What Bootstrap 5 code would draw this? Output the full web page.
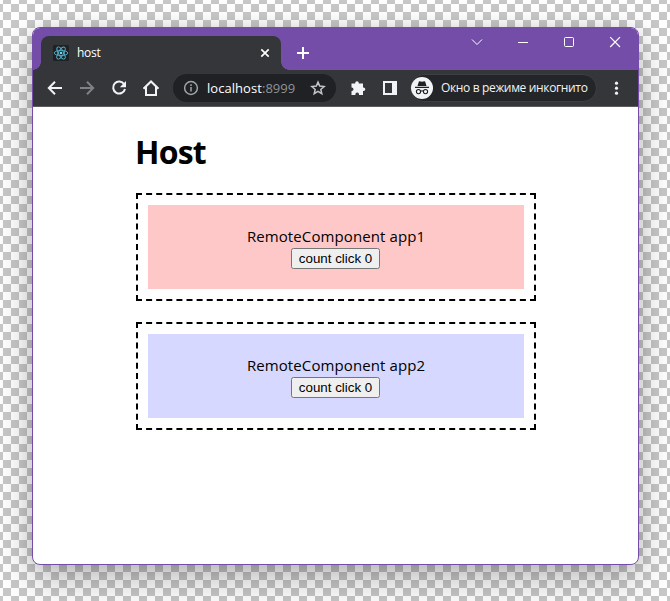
<!DOCTYPE html>
<html lang="en">
<head>
<meta charset="utf-8">
<title>host</title>
<link href="https://cdn.jsdelivr.net/npm/bootstrap@5.3.0/dist/css/bootstrap.min.css" rel="stylesheet">
<style>
body{height:601px;overflow:hidden;padding:27px 31px 0 32px;font-family:"Open Sans","Noto Sans",sans-serif;
background:repeating-conic-gradient(#c8c8c8 0 25%,#fff 0 50%) -5px -4px/16px 16px}
.window{height:538px;border:1px solid #744da9;border-radius:8px;box-shadow:0 14px 38px rgba(0,0,0,.28),0 0 14px rgba(0,0,0,.08);background:#fff}
.titlebar{height:42px;background:#744da9;color:#fff;padding-left:8px}
.tab{width:240px;height:34px;background:#35363a;border-radius:8px 8px 0 0;padding:0 11px 0 12px}
.tab::before,.tab::after{content:"";position:absolute;bottom:0;width:8px;height:8px}
.tab::before{left:-8px;background:radial-gradient(circle at 0 0,transparent 7.5px,#35363a 8px)}
.tab::after{right:-8px;background:radial-gradient(circle at 100% 0,transparent 7.5px,#35363a 8px)}
.tab-title{font-size:12px;line-height:16px;margin-left:8px;letter-spacing:-.3px}
.new-tab{margin:0 0 11px 16px}
.controls{gap:32px;padding:7px 16px 0 0}
.toolbar{height:37px;background:#35363a;border-bottom:1px solid #5b5c60;padding:0 14px}
.address{width:163px;height:28px;background:#202124;padding:0 10px;margin-left:14px}
.url{font-size:13px;color:#fff;margin-left:8px;letter-spacing:.05px;line-height:18px}
.url span{color:#8f9399}
.extensions{margin-left:14px}
.incognito{width:187px;height:28px;background:#242528;border:1px solid #3e3f43;margin-left:12px}
.incognito-label{font-size:12px;color:#f1f3f4;margin-left:8px;line-height:16px;white-space:nowrap;letter-spacing:-.35px}
.page{width:400px;margin-left:103px;color:#000}
.page h1{font-size:32px;line-height:43px;font-weight:700;margin:23px 0 20px -1px;letter-spacing:-.8px}
.remote{height:108px;border:2px dashed #000;padding:10px;margin-bottom:21px}
.remote-body{height:84px;padding-top:20px;font-size:15px;letter-spacing:.1px;line-height:23px}
.pink{background:#ffc8c8}.blue{background:#d6d8ff}
.counter{width:89px;height:21px;margin-right:1px;border:1px solid #767676;border-radius:2.5px;background:#efefef;color:#000;font:13.33px/17px "Liberation Sans",Arial,sans-serif;padding:0}
svg{display:block;flex:none}
</style>
<script src="https://cdn.jsdelivr.net/npm/bootstrap@5.3.0/dist/js/bootstrap.bundle.min.js"></script>
</head>
<body>
<div class="window overflow-hidden">
  <header class="titlebar d-flex align-items-end">
    <div class="tab position-relative d-flex align-items-center">
      <svg width="16" height="16" viewBox="0 0 16 16"><rect width="16" height="16" rx="1.5" fill="#202124"/><g fill="none" stroke="#53b3cb" stroke-width=".9"><ellipse cx="8" cy="8" rx="6.8" ry="2.6"/><ellipse cx="8" cy="8" rx="6.8" ry="2.6" transform="rotate(60 8 8)"/><ellipse cx="8" cy="8" rx="6.8" ry="2.6" transform="rotate(120 8 8)"/></g><circle cx="8" cy="8" r="1.3" fill="#61dafb"/></svg>
      <span class="tab-title">host</span>
      <svg class="ms-auto" width="10" height="10" viewBox="0 0 10 10" stroke="#fff" stroke-width="1.7"><path d="M1.3 1.3l7.4 7.4M8.7 1.3L1.3 8.7"/></svg>
    </div>
    <svg class="new-tab" width="12" height="12" viewBox="0 0 12 12" stroke="#fff" stroke-width="2"><path d="M6 0v12M0 6h12"/></svg>
    <div class="controls d-flex align-self-start ms-auto">
      <svg width="14" height="14" viewBox="0 0 14 14" fill="none" stroke="#fff"><path d="M2 4.5l5 5 5-5"/></svg>
      <svg width="14" height="14" viewBox="0 0 14 14" stroke="#fff"><path d="M2 7.5h10"/></svg>
      <svg width="14" height="14" viewBox="0 0 14 14" fill="none" stroke="#fff"><rect x="2.5" y="2.5" width="9" height="9" rx="1"/></svg>
      <svg width="14" height="14" viewBox="0 0 14 14" stroke="#fff" stroke-width="1.2"><path d="M2.2 2.2l9.8 9.8M12 2.2L2.2 12"/></svg>
    </div>
  </header>
  <nav class="toolbar d-flex align-items-center">
    <svg width="16" height="16" viewBox="0 0 16 16" fill="none" stroke="#f1f3f4" stroke-width="2"><path d="M15 8H2.5M8 1.7L1.8 8 8 14.3"/></svg>
    <svg class="ms-3" width="16" height="16" viewBox="0 0 16 16" fill="none" stroke="#808185" stroke-width="2"><path d="M1 8h12.5M8 1.7L14.2 8 8 14.3"/></svg>
    <svg class="ms-3" width="16" height="16" viewBox="0 0 16 16" fill="none" stroke="#f1f3f4" stroke-width="2"><path d="M13.2 4.2A6 6 0 1 0 14 9"/><path d="M15 1v6.2H8.8z" fill="#f1f3f4" stroke="none"/></svg>
    <svg class="ms-3" width="16" height="16" viewBox="0 0 16 16" fill="none" stroke="#f1f3f4" stroke-width="2"><path d="M.5 8.7L8 1.5l7.5 7.2M3 7v8h10V7"/></svg>
    <div class="address d-flex align-items-center rounded-pill">
      <svg width="16" height="16" viewBox="0 0 16 16" fill="none" stroke="#a0a4a9" stroke-width="1.5"><circle cx="8" cy="8" r="6.4"/><path d="M8 7v4.5M8 4.3v1.6"/></svg>
      <span class="url">localhost<span>:8999</span></span>
      <svg class="ms-auto" width="16" height="16" viewBox="0 0 16 16" fill="none" stroke="#c3c5c8" stroke-width="1.5"><path d="M8 2.1l1.7 4 4.4.4-3.3 2.9 1 4.3L8 11.4l-3.8 2.3 1-4.3L1.9 6.5l4.4-.4z"/></svg>
    </div>
    <svg class="extensions" width="16" height="16" viewBox="0 0 16 16" fill="#f1f3f4"><path d="M1.5 3.5h3.7V3a1.8 1.8 0 0 1 3.6 0v.5H13v4h.5a1.8 1.8 0 0 1 0 3.6H13V15H9v-.7a1.8 1.8 0 0 0-3.6 0v.7H1.5v-4h.2a1.8 1.8 0 0 0 0-3.6h-.2z"/></svg>
    <svg class="ms-3" width="16" height="16" viewBox="0 0 16 16"><path fill="#f1f3f4" fill-rule="evenodd" d="M1 1h14v14H1zM3 3v10h7V3z"/></svg>
    <div class="incognito d-flex align-items-center rounded-pill">
      <svg width="22" height="22" viewBox="0 0 22 22"><circle cx="11" cy="11" r="11" fill="#f1f3f4"/><path d="M6.5 9l1.3-4.2q.2-.6.9-.5l2.3.5 2.3-.5q.7-.1.9.5L15.5 9zM4 9.7h14V11H4z" fill="#202124"/><g fill="none" stroke="#202124" stroke-width="1.1"><circle cx="7.5" cy="14.6" r="2.1"/><circle cx="14.5" cy="14.6" r="2.1"/><path d="M9.6 14.2q1.4-.8 2.8 0"/></g></svg>
      <span class="incognito-label">Окно в режиме инкогнито</span>
    </div>
    <svg class="ms-auto" width="15" height="16" viewBox="0 0 15 16" fill="#f1f3f4"><circle cx="7.5" cy="3.2" r="1.6"/><circle cx="7.5" cy="8.2" r="1.6"/><circle cx="7.5" cy="13.2" r="1.6"/></svg>
  </nav>
  <main class="page d-flow-root">
    <h1>Host</h1>
    <section class="remote"><div class="remote-body pink d-flex flex-column align-items-center"><div>RemoteComponent app1</div><button class="counter">count click 0</button></div></section>
    <section class="remote"><div class="remote-body blue d-flex flex-column align-items-center"><div>RemoteComponent app2</div><button class="counter">count click 0</button></div></section>
  </main>
</div>
</body>
</html>
